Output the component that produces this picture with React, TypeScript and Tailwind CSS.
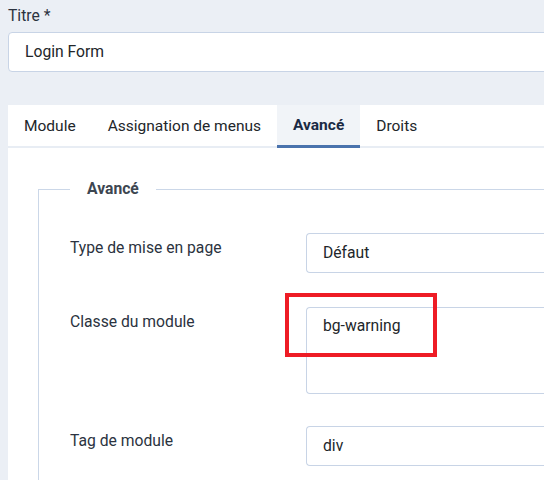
import {useState} from "react";

const tabs = ["Module", "Assignation de menus", "Avancé", "Droits"];

function Field({label, children}: {label: string; children: React.ReactNode}) {
  return (
    <div className="flex flex-row">
      <div className="w-[236px] shrink-0 pt-[6px] text-[15.7px] leading-[18px] text-[#2b3340]">{label}</div>
      <div className="flex-1">{children}</div>
    </div>
  );
}

export default function App() {
  const [active, setActive] = useState("Avancé");

  return (
    <div className="w-[544px] h-[480px] overflow-hidden bg-[#ebeff5] pl-[8px] font-['Roboto',sans-serif]">
      <div className="pt-[7px] text-[15.7px] leading-[18px] text-[#2b3340]">Titre *</div>
      <div className="mt-[7px] h-[40px] w-[560px] rounded-[4px] border border-[#c8d4e6] bg-white pl-[16px] flex items-center text-[15.7px] text-[#22262a]">
        Login Form
      </div>

      <div className="mt-[33px] bg-white w-[560px] h-[420px]">
        <div className="flex flex-row h-[43px] border-b-[2px] border-[#e8edf4]">
          {tabs.map((t) => (
            <div
              key={t}
              onClick={() => setActive(t)}
              className={
                t === active
                  ? "px-[16px] h-[43px] pt-[1px] -mb-[2px] flex items-center bg-[#f1f4f8] border-b-[3px] border-[#4a73ad] text-[15.5px] font-bold text-[#1a2a44]"
                  : "px-[16px] h-[41px] pt-[2px] flex items-center text-[15.5px] text-[#22262a]"
              }
            >
              {t}
            </div>
          ))}
        </div>

        <div className="pl-[30px] pt-[31px]">
          <fieldset className="border-l border-t border-[#cbd7e8] pl-[31px] pt-[34px] pb-[40px]">
            <legend className="px-[17px] text-[15.7px] leading-[20px] font-bold text-[#3d4651]">Avancé</legend>

            <Field label="Type de mise en page">
              <div className="h-[40px] rounded-l-[4px] border border-r-0 border-[#c8d4e6] pl-[16px] flex items-center text-[15.7px] text-[#22262a]">
                Défaut
              </div>
            </Field>

            <div className="mt-[34px]">
              <Field label="Classe du module">
                <div className="relative h-[87px] rounded-l-[4px] border border-r-0 border-[#c8d4e6] pl-[16px] pt-[8px] text-[15.7px] leading-[20px] text-[#22262a]">
                  bg-warning
                  <div className="absolute left-[-22px] top-[-15px] w-[152px] h-[64px] border-[4px] border-[#ee1c25]" />
                </div>
              </Field>
            </div>

            <div className="mt-[32px]">
              <Field label="Tag de module">
                <div className="h-[40px] rounded-l-[4px] border border-r-0 border-[#c8d4e6] pl-[16px] flex items-center text-[15.7px] text-[#22262a]">
                  div
                </div>
              </Field>
            </div>
          </fieldset>
        </div>
      </div>
    </div>
  );
}
